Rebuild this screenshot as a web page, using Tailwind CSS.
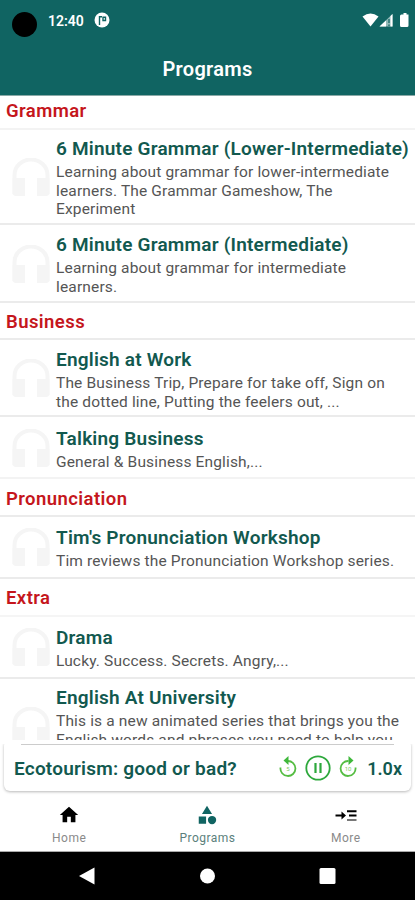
<!DOCTYPE html>
<html lang="en">
<head>
<meta charset="utf-8">
<title>Programs</title>
<script src="https://cdn.jsdelivr.net/npm/@tailwindcss/browser@4"></script>
</head>
<body class="bg-white">
<svg class="hidden">
  <symbol id="phones" viewBox="0 0 38 38"><path d="M2.500 36V17a16.500 15.500 0 0 1 33 0V36" fill="none" stroke="#f5f5f5" stroke-width="4"/><path d="M.5 20H13V38H4Q.5 38 .5 34ZM25 20H37.500V34Q37.500 38 34 38H25Z" fill="#f5f5f5"/></symbol>
</svg>
<div class="relative flex h-[900px] w-[415px] flex-col overflow-hidden bg-white font-['Roboto',sans-serif]">
  <header class="h-24 shrink-0 border-b border-[#8aa9a7] bg-[#106462] text-white">
    <div class="flex h-[42px] items-start pl-3 pr-[6px]">
      <div class="mt-3 size-[25px] rounded-full bg-black"></div>
      <div class="ml-[11px] mt-[11px] text-[14px] leading-5 font-semibold">12:40</div>
      <svg class="ml-[10px] mt-[12px] size-4" viewBox="0 0 16 16"><circle cx="8" cy="8" r="7.500" fill="#fff"/><path d="M5.500 13V4.500M4.800 4.800H8M9 5.200H11.500V8.500H9Z" fill="none" stroke="#106462" stroke-width="1.400"/></svg>
      <svg class="ml-auto mt-[12px] h-4 w-[47px]" viewBox="0 0 47 16"><path d="M.5 4.500Q8.500-1.500 16.500 4.500L8.500 14.500Z" fill="#fff"/><path d="M30.500 2V14.500H17.500Z" fill="#fff" fill-opacity=".55"/><path d="M24 8.500V14.500H17.500ZM28.500 4L30.500 2V14.500H28.500Z" fill="#fff"/><path d="M27 7V11M27 12.500V14" stroke="#106462" stroke-width="1.200"/><path d="M39.500 2.500H41.500V1H44.500V2.500H46.500V13.500Q46.500 15 45 15H39.500Q38 15 38 13.500V4Q38 2.500 39.500 2.500Z" fill="#fff"/></svg>
    </div>
    <h1 class="pt-[15px] text-center text-[20px] leading-6 font-semibold tracking-[0.3px]">Programs</h1>
  </header>

  <main class="h-[644px] shrink-0 overflow-hidden text-[15.500px] leading-[18.500px] tracking-[0.155px] text-[#555]">
    <h2 class="h-[34px] border-b-2 border-[#f3f3f3] pl-[6px] pt-[3px] text-[18.500px] leading-6 font-semibold tracking-[0.42px] text-[#c5161c]">Grammar</h2>
    <article class="flex h-[95px] border-b-2 border-[#ebebeb] pl-3"><svg class="mt-[28px] size-[38px] shrink-0"><use href="#phones"/></svg><div class="ml-[6px] pt-[8px] whitespace-nowrap"><h3 class="mb-[3px] text-[19px] leading-[22px] font-semibold tracking-[0.21px] text-[#12594f]">6 Minute Grammar (Lower-Intermediate)</h3><p>Learning about grammar for lower-intermediate<br>learners. The Grammar Gameshow, The<br>Experiment</p></div></article>
    <article class="flex h-[78px] border-b-2 border-[#ebebeb] pl-3"><svg class="mt-[20px] size-[38px] shrink-0"><use href="#phones"/></svg><div class="ml-[6px] pt-[9px] whitespace-nowrap"><h3 class="mb-[3px] text-[19px] leading-[22px] font-semibold tracking-[0.21px] text-[#12594f]">6 Minute Grammar (Intermediate)</h3><p>Learning about grammar for intermediate<br>learners.</p></div></article>
    <h2 class="h-[37px] border-b-2 border-[#ebebeb] pl-[6px] pt-[7px] text-[18.500px] leading-6 font-semibold tracking-[0.42px] text-[#c5161c]">Business</h2>
    <article class="flex h-[77px] border-b-2 border-[#ebebeb] pl-3"><svg class="mt-[19px] size-[38px] shrink-0"><use href="#phones"/></svg><div class="ml-[6px] pt-[9px] whitespace-nowrap"><h3 class="mb-[3px] text-[19px] leading-[22px] font-semibold tracking-[0.21px] text-[#12594f]">English at Work</h3><p>The Business Trip, Prepare for take off, Sign on<br>the dotted line, Putting the feelers out, ...</p></div></article>
    <article class="flex h-[62px] border-b-2 border-[#f3f3f3] pl-3"><svg class="mt-[12px] size-[38px] shrink-0"><use href="#phones"/></svg><div class="ml-[6px] pt-[11px] whitespace-nowrap"><h3 class="mb-[3px] text-[19px] leading-[22px] font-semibold tracking-[0.21px] text-[#12594f]">Talking Business</h3><p>General &amp; Business English,...</p></div></article>
    <h2 class="h-[38px] border-b-2 border-[#ebebeb] pl-[6px] pt-[8px] text-[18.500px] leading-6 font-semibold tracking-[0.42px] text-[#c5161c]">Pronunciation</h2>
    <article class="flex h-[62px] border-b-2 border-[#ebebeb] pl-3"><svg class="mt-[11px] size-[38px] shrink-0"><use href="#phones"/></svg><div class="ml-[6px] pt-[10px] whitespace-nowrap"><h3 class="mb-[3px] text-[19px] leading-[22px] font-semibold tracking-[0.21px] text-[#12594f]">Tim's Pronunciation Workshop</h3><p>Tim reviews the Pronunciation Workshop series.</p></div></article>
    <h2 class="h-[38px] border-b-2 border-[#f5f5f5] pl-[6px] pt-[7px] text-[18.500px] leading-6 font-semibold tracking-[0.42px] text-[#c5161c]">Extra</h2>
    <article class="flex h-[62px] border-b-2 border-[#ebebeb] pl-3"><svg class="mt-[11px] size-[38px] shrink-0"><use href="#phones"/></svg><div class="ml-[6px] pt-[10px] whitespace-nowrap"><h3 class="mb-[3px] text-[19px] leading-[22px] font-semibold tracking-[0.21px] text-[#12594f]">Drama</h3><p>Lucky. Success. Secrets. Angry,...</p></div></article>
    <article class="flex h-[80px] pl-3"><svg class="mt-[28px] size-[38px] shrink-0"><use href="#phones"/></svg><div class="ml-[6px] pt-[8px] whitespace-nowrap"><h3 class="mb-[3px] text-[19px] leading-[22px] font-semibold tracking-[0.21px] text-[#12594f]">English At University</h3><p>This is a new animated series that brings you the<br>English words and phrases you need to help you</p></div></article>
  </main>

  <section class="mx-1 h-[51px] shrink-0 rounded-md bg-white shadow-[0_1px_3px_rgba(0,0,0,0.28)] [clip-path:inset(4px_-4px_-6px_-4px)]">
    <div class="mx-[17px] mt-[4px] h-px bg-[#ccc]"></div>
    <div class="flex h-[48px] items-center pl-[10px] pr-[9px] text-[#12594f]">
      <div class="text-[19px] font-semibold tracking-[0.22px] whitespace-nowrap">Ecotourism: good or bad?</div>
      <svg class="ml-auto -mt-[2px] h-7 w-[80px]" viewBox="0 0 80 28" fill="none">
        <path d="M2.500 13.500A7.500 7.500 0 1 0 9.500 7" stroke="#55bd42" stroke-width="1.800"/><path d="M10.500 2V11L5.500 6.500Z" fill="#3fb83b"/><text x="10" y="16.500" text-anchor="middle" font-size="6" fill="#7dcc65">5</text>
        <circle cx="40" cy="14" r="11.700" stroke="#2da83c" stroke-width="1.800"/><path d="M37.500 9V19M42.500 9V19" stroke="#2da83c" stroke-width="2.200"/>
        <path d="M77.500 13.500A7.500 7.500 0 1 1 70.500 7" stroke="#55bd42" stroke-width="1.800"/><path d="M70.500 2V11L75.500 6.500Z" fill="#3fb83b"/><text x="70" y="16.500" text-anchor="middle" font-size="6" fill="#7dcc65">10</text>
      </svg>
      <div class="-mt-[2px] ml-[9px] text-[18px] font-semibold">1.0x</div>
    </div>
  </section>

  <nav class="grid h-[61px] shrink-0 grid-cols-3 border-b border-[#aaa] pt-[12px] text-center text-[12px] leading-4 tracking-[0.45px] text-[#8a8a8a]">
    <div class="flex flex-col items-center"><svg class="mt-px size-[22px]" viewBox="0 0 24 24"><path d="M10 20v-6h4v6h5v-8h3L12 3 2 12h3v8Z"/></svg><span class="mt-[4px]">Home</span></div>
    <div class="flex flex-col items-center text-[#5b7f7c]"><svg class="mt-px size-[22px]" viewBox="0 0 24 24" fill="#106462"><path d="M12 2l-5.500 9h11ZM3 13.500h8v8H3Z"/><circle cx="17.500" cy="17.500" r="4.500"/></svg><span class="mt-[4px]">Programs</span></div>
    <div class="flex flex-col items-center"><svg class="mt-px h-[22px] w-[22px]" viewBox="0 0 22 22" fill="none" stroke="#000"><path d="M.5 11.500H9" stroke-width="2"/><path d="M6.500 7.500L11 11.500L6.500 15.500Z" fill="#000" stroke="none"/><path d="M12 7.200H21.500M14 11.500H21.500" stroke-width="2"/><path d="M12 16H21.500" stroke="#777" stroke-width="2"/></svg><span class="mt-[4px]">More</span></div>
  </nav>
  <footer class="h-[48px] shrink-0 bg-black">
    <svg class="h-[48px] w-full" viewBox="0 0 415 48" fill="#fff"><path d="M79 24L94.500 15.500V32.500Z"/><circle cx="207.500" cy="24" r="7.500"/><rect x="319.500" y="16" width="16" height="16" rx="1.500"/></svg>
  </footer>
</div>
</body>
</html>
